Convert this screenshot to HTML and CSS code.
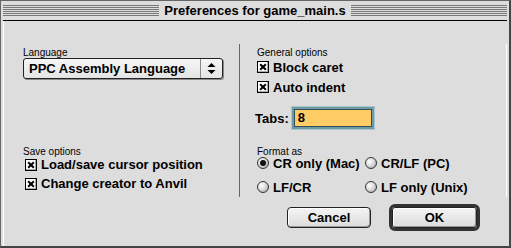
FILE: index.html
```html
<!DOCTYPE html>
<html lang="en">

<head>
    <meta charset="UTF-8" />
    <link rel="stylesheet" href="styles.css">
    <title>Preferences for game_main.s</title>
</head>

<body>
    <div class="window">
        <div class="titlebar">
            <span class="title">Preferences for game_main.s</span>
        </div>

        <div class="content">
            <div class="main">
                <div class="left">
                    <div class="group">
                        <p class="label">Language</p>
                        <div class="popup">
                            <span class="popup-text">PPC Assembly Language</span>
                            <span class="popup-arrows">
                                <svg width="9" height="11" viewBox="0 0 9 11">
                                    <path d="M4.5 0 L8.5 4 L0.5 4 Z M0.5 7 L8.5 7 L4.5 11 Z" fill="#000" />
                                </svg>
                            </span>
                        </div>
                    </div>

                    <div class="group save">
                        <p class="label">Save options</p>
                        <label class="check"><span class="box"></span>Load/save cursor position</label>
                        <label class="check"><span class="box"></span>Change creator to Anvil</label>
                    </div>
                </div>

                <div class="right">
                    <div class="group general">
                        <p class="label">General options</p>
                        <label class="check"><span class="box"></span>Block caret</label>
                        <label class="check"><span class="box"></span>Auto indent</label>
                    </div>

                    <div class="tabs">
                        <span>Tabs:</span>
                        <div class="field">8</div>
                    </div>

                    <div class="group format">
                        <p class="label">Format as</p>
                        <div class="radios">
                            <label class="radio"><span class="dot on"></span>CR only (Mac)</label>
                            <label class="radio"><span class="dot"></span>CR/LF (PC)</label>
                            <label class="radio"><span class="dot"></span>LF/CR</label>
                            <label class="radio"><span class="dot"></span>LF only (Unix)</label>
                        </div>
                    </div>
                </div>
            </div>

            <div class="buttons">
                <button class="btn">Cancel</button>
                <div class="default-ring"><button class="btn">OK</button></div>
            </div>
        </div>
    </div>
</body>

</html>
```

FILE: styles.css
```css
* {
    margin: 0;
    padding: 0;
    box-sizing: border-box;
}

body {
    font-family: 'Liberation Sans', Arial, sans-serif;
    background: #dddddd;
    color: #000;
}

.window {
    width: 511px;
    height: 248px;
    background: #dddddd;
    border: 1px solid #666;
    border-right: 2px solid #444;
    border-bottom: 2px solid #444;
    display: flex;
    flex-direction: column;
}

/* title bar with the pinstripes */

.titlebar {
    height: 20px;
    margin: 0 2px 0 2px;
    border-bottom: 1px solid #000;
    background: repeating-linear-gradient(to bottom, #dddddd 0, #dddddd 1px, #777 1px, #777 2px);
    background-size: 100% 13px;
    background-position: 0 3px;
    background-repeat: no-repeat;
    background-color: #dddddd;
    padding: 0 3px;
    display: flex;
    justify-content: center;
    align-items: center;
}

.title {
    background: #dddddd;
    padding: 0 5px;
    font-weight: 700;
    font-size: 13px;
    line-height: 16px;
}

.content {
    flex: 1;
    border-left: 1px solid #fff;
    margin-left: 2px;
    display: flex;
    flex-direction: column;
}

.main {
    display: flex;
    padding-top: 23px;
}

.left {
    width: 235px;
    padding-left: 19px;
    padding-top: 3px;
    display: flex;
    flex-direction: column;
}

.right {
    border-left: 1px solid #666;
    box-shadow: 1px 0 0 #fff;
    padding-left: 17px;
    padding-top: 3px;
    padding-bottom: 1px;
    width: 267px;
}

.label {
    font-size: 10px;
    line-height: 12px;
    height: 12px;
}

.save {
    margin-top: 67px;
}

.save .label {
    margin-bottom: -3px;
}

.general .label {
    margin-bottom: -2px;
}

/* popup menu */

.popup {
    margin-top: -1px;
    width: 200px;
    height: 21px;
    border: 1px solid #222;
    border-radius: 3px;
    background: linear-gradient(#f6f6f6, #e4e4e4);
    box-shadow: 1px 1px 0 #888;
    display: flex;
    align-items: center;
}

.popup-text {
    flex: 1;
    font-weight: 700;
    font-size: 13px;
    padding-left: 5px;
}

.popup-arrows {
    width: 22px;
    height: 19px;
    border-left: 1px solid #888;
    display: flex;
    align-items: center;
    justify-content: center;
}

/* checkboxes */

.check {
    display: flex;
    align-items: center;
    font-weight: 700;
    font-size: 13px;
    height: 20px;
    gap: 4px;
}

.save .check {
    padding-left: 2px;
    height: 19px;
}

.box {
    width: 12px;
    height: 12px;
    border: 1px solid #000;
    background: #fff;
    box-shadow: inset -1px -1px 0 #aaa;
    position: relative;
}

.box::before,
.box::after {
    content: "";
    position: absolute;
    left: 1px;
    top: 4px;
    width: 8px;
    height: 2px;
    background: #000;
    transform: rotate(45deg);
}

.box::after {
    transform: rotate(-45deg);
}

/* tabs field */

.tabs {
    display: flex;
    align-items: center;
    gap: 3px;
    margin-top: 10px;
    margin-left: -2px;
    font-weight: 700;
    font-size: 13px;
}

.field {
    width: 82px;
    height: 22px;
    border: 2px solid #6f9aa4;
    outline: 1px solid #2f4f58;
    outline-offset: -3px;
    background: #ffcc66;
    padding-left: 4px;
    line-height: 18px;
    box-shadow: 0 0 0 1px #a9c6cc;
}

/* radios */

.format {
    margin-top: 17px;
}

.radios {
    display: grid;
    grid-template-columns: 108px auto;
    row-gap: 6px;
    margin-top: -4px;
}

.radio {
    display: flex;
    align-items: center;
    gap: 4px;
    font-weight: 700;
    font-size: 13px;
    height: 18px;
}

.dot {
    width: 12px;
    height: 12px;
    border-radius: 50%;
    border: 1px solid #333;
    background: radial-gradient(circle at 35% 35%, #fff 0, #ddd 45%, #999 100%);
    position: relative;
}

.dot.on::after {
    content: "";
    position: absolute;
    left: 2px;
    top: 2px;
    width: 6px;
    height: 6px;
    border-radius: 50%;
    background: #111;
}

/* buttons */

.buttons {
    display: flex;
    justify-content: flex-end;
    align-items: center;
    gap: 18px;
    padding-right: 29px;
    margin-top: 7px;
}

.btn {
    font-family: 'Liberation Sans', Arial, sans-serif;
    font-weight: 700;
    font-size: 13px;
    width: 84px;
    height: 21px;
    border: 1px solid #222;
    border-radius: 4px;
    background: linear-gradient(#f4f4f4, #dcdcdc);
    box-shadow: inset -1px -1px 0 #999, inset 1px 1px 0 #fff;
    color: #000;
}

.default-ring {
    width: 91px;
    height: 27px;
    border: 3px solid #333;
    border-radius: 6px;
    background: #ccc;
    padding: 0;
    display: flex;
}

.default-ring .btn {
    width: 85px;
    height: 21px;
    border-radius: 3px;
}
```
